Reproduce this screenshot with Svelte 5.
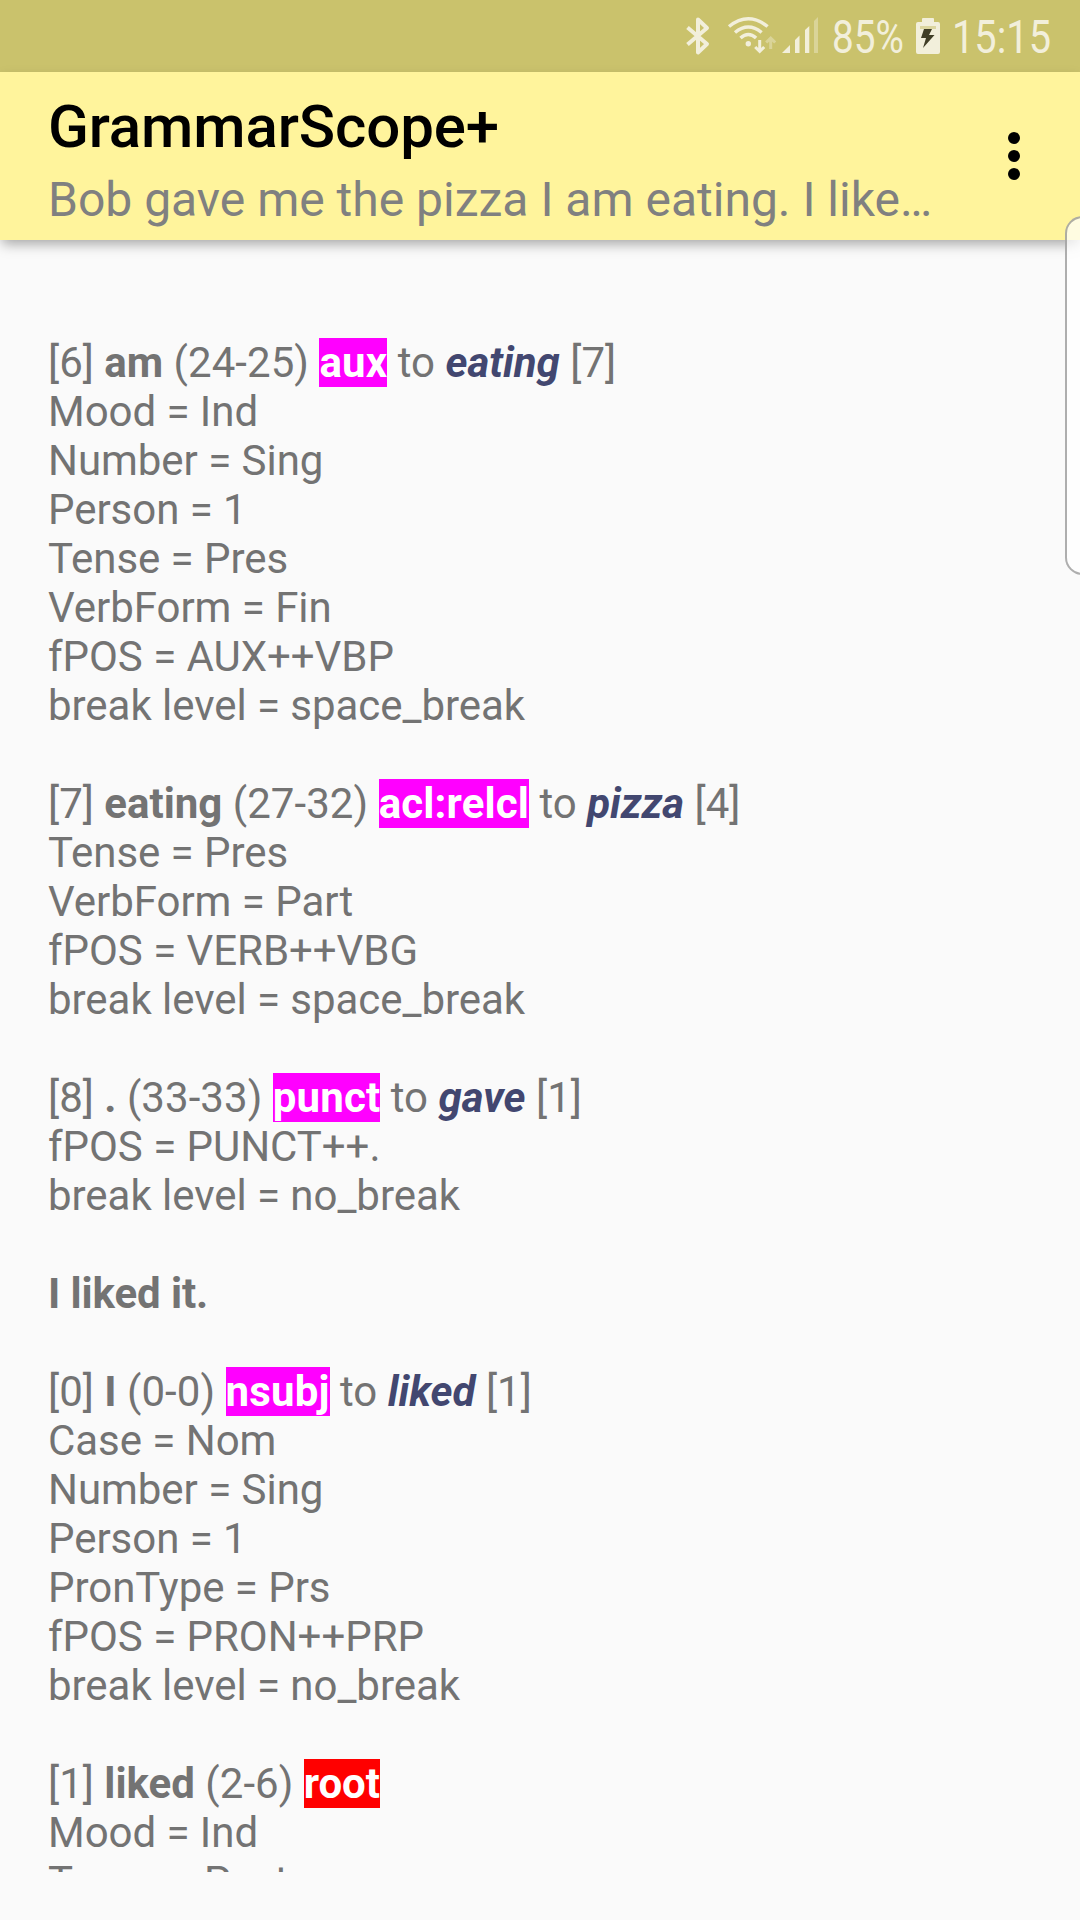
<script>
  const tokens = [
    { index: 6, word: 'am', span: '24-25', relation: 'aux', head: 'eating', headIndex: 7,
      features: ['Mood = Ind', 'Number = Sing', 'Person = 1', 'Tense = Pres', 'VerbForm = Fin', 'fPOS = AUX++VBP', 'break level = space_break'] },
    { index: 7, word: 'eating', span: '27-32', relation: 'acl:relcl', head: 'pizza', headIndex: 4,
      features: ['Tense = Pres', 'VerbForm = Part', 'fPOS = VERB++VBG', 'break level = space_break'] },
    { index: 8, word: '.', span: '33-33', relation: 'punct', head: 'gave', headIndex: 1,
      features: ['fPOS = PUNCT++.', 'break level = no_break'] },
    { sentence: 'I liked it.' },
    { index: 0, word: 'I', span: '0-0', relation: 'nsubj', head: 'liked', headIndex: 1,
      features: ['Case = Nom', 'Number = Sing', 'Person = 1', 'PronType = Prs', 'fPOS = PRON++PRP', 'break level = no_break'] },
    { index: 1, word: 'liked', span: '2-6', relation: 'root',
      features: ['Mood = Ind', 'Tense = Past'] }
  ];
</script>

<div class="screen">
  <header class="status">
    <svg class="bluetooth" width="24" height="38" viewBox="0 0 24 38" fill="none">
      <path d="M1.500 10.500 21 27 12 35.500V2.500L21 11 1.500 27.500" stroke-width="4" stroke-linejoin="round" />
    </svg>
    <svg class="wifi" width="50" height="38" viewBox="0 0 50 38" fill="none">
      <path d="M2 9.500Q21.300-6 40.600 9.500M8 15.500Q21.300 4.500 34.600 15.500M13.500 21Q21.300 14 29.100 21" stroke-width="3.500" />
      <circle class="solid" cx="21.300" cy="26.700" r="2.700" />
      <path d="M32.700 23V34M28.200 30 32.700 34.500 37.200 30" stroke-width="3" />
      <path class="faint" d="M43.700 32V22M39.200 25.500 43.700 21 48.200 25.500" stroke-width="3" />
    </svg>
    <svg class="signal" width="36" height="38" viewBox="0 0 36 38">
      <path class="solid" d="M0 36 8 28V36ZM13 23 17.500 18.500V36H13ZM23 13 27.300 9V36H23Z" />
      <path class="solid faint" d="M32 4 36 0V36H32Z" />
    </svg>
    <svg class="percent" width="72" height="54" viewBox="0 0 72 54">
      <text x="0" y="36" textLength="72" lengthAdjust="spacingAndGlyphs">85%</text>
    </svg>
    <svg class="battery" width="24" height="36" viewBox="0 0 24 36">
      <path class="solid" d="M7 0H17Q18 0 18 1V4H22Q24 4 24 6V34Q24 36 22 36H2Q0 36 0 34V6Q0 4 2 4H6V1Q6 0 7 0Z" />
      <path class="drained" d="M4 8H20V11H4Z" />
      <path class="bolt" d="M8 11H16L13 17H18.500L7 30 10 20H5Z" />
    </svg>
    <svg class="clock" width="99" height="54" viewBox="0 0 99 54">
      <text x="0" y="36" textLength="99" lengthAdjust="spacingAndGlyphs">15:15</text>
    </svg>
  </header>

  <div class="appbar">
    <div class="titles">
      <h1>GrammarScope+</h1>
      <p>Bob gave me the pizza I am eating. I like…</p>
    </div>
    <button aria-label="More options"><i></i><i></i><i></i></button>
  </div>

  <main>
    {#each tokens as token}
      <section>
        {#if token.sentence}
          <div class="sentence"><b>{token.sentence}</b></div>
        {:else}
          <div>
            [{token.index}] <b>{token.word}</b> <span>({token.span})</span> <mark class:root={!token.head}>{token.relation}</mark>
            {#if token.head}to <em>{token.head}</em> [{token.headIndex}]{/if}
          </div>
          {#each token.features as feature}
            <div class="feature">{feature}</div>
          {/each}
        {/if}
      </section>
    {/each}
  </main>
  <div class="edge-handle"></div>
</div>

<style>
  :global(body) { margin: 0; background: #fafafa; }
  .screen {
    position: relative;
    width: 1080px;
    height: 1920px;
    overflow: hidden;
    display: flex;
    flex-direction: column;
    background: #fafafa;
    font-family: Roboto, sans-serif;
  }
  .status {
    flex: none;
    height: 72px;
    box-sizing: border-box;
    display: flex;
    align-items: flex-start;
    padding: 17px 28px 0 686px;
    background: #cac26c;
  }
  .status svg { flex: none; display: block; overflow: visible; stroke: #f2efdb; }
  .status .signal, .status .battery, .status text, .status .solid { stroke: none; }
  .solid, text { fill: #f2efdb; }
  .status .faint { opacity: 0.4; }
  .drained { fill: #dcd6a0; }
  .bolt { fill: #403e26; }
  text { font-size: 46px; }
  .wifi { margin-left: 17px; }
  .signal { margin-left: 5px; }
  .percent { margin-left: 14px; }
  .battery { margin: 1px 0 0 12px; }
  .clock { margin-left: 12px; }
  .appbar {
    flex: none;
    position: relative;
    height: 168px;
    box-sizing: border-box;
    display: flex;
    justify-content: space-between;
    padding: 20px 60px 0 48px;
    background: #fff49c;
    box-shadow: 0 6px 12px -2px rgba(0, 0, 0, 0.34);
  }
  h1, p { margin: 0; white-space: nowrap; }
  h1 { font-size: 60px; line-height: 70px; font-weight: 500; letter-spacing: -0.1px; color: #000; }
  p { margin-top: 10px; font-size: 48px; line-height: 56px; color: #808080; }
  button {
    align-self: flex-start;
    display: flex;
    flex-direction: column;
    gap: 6px;
    margin-top: 40px;
    padding: 0;
    border: 0;
    background: none;
  }
  button i { width: 12px; height: 12px; border-radius: 50%; background: #000; }
  main {
    height: 1534px;
    padding: 0 48px;
    margin-top: 98px;
    overflow: hidden;
    font-size: 42px;
    line-height: 49px;
    color: #737373;
    white-space: nowrap;
  }
  section { margin-bottom: 49px; }
  .feature { letter-spacing: -0.04px; }
  .sentence { letter-spacing: -0.1px; }
  b { font-weight: 700; }
  span { letter-spacing: 0.06px; }
  mark { background: #f0f; color: #fff; font-weight: 700; letter-spacing: 0.15px; }
  mark.root { background: #f00; letter-spacing: -0.1px; }
  em { font-weight: 700; color: #424770; }
  .edge-handle {
    position: absolute;
    top: 216px;
    right: -20px;
    width: 31px;
    height: 355px;
    border: 2px solid rgba(120, 120, 120, 0.6);
    border-radius: 20px;
    background: rgba(255, 255, 255, 0.7);
  }
</style>
